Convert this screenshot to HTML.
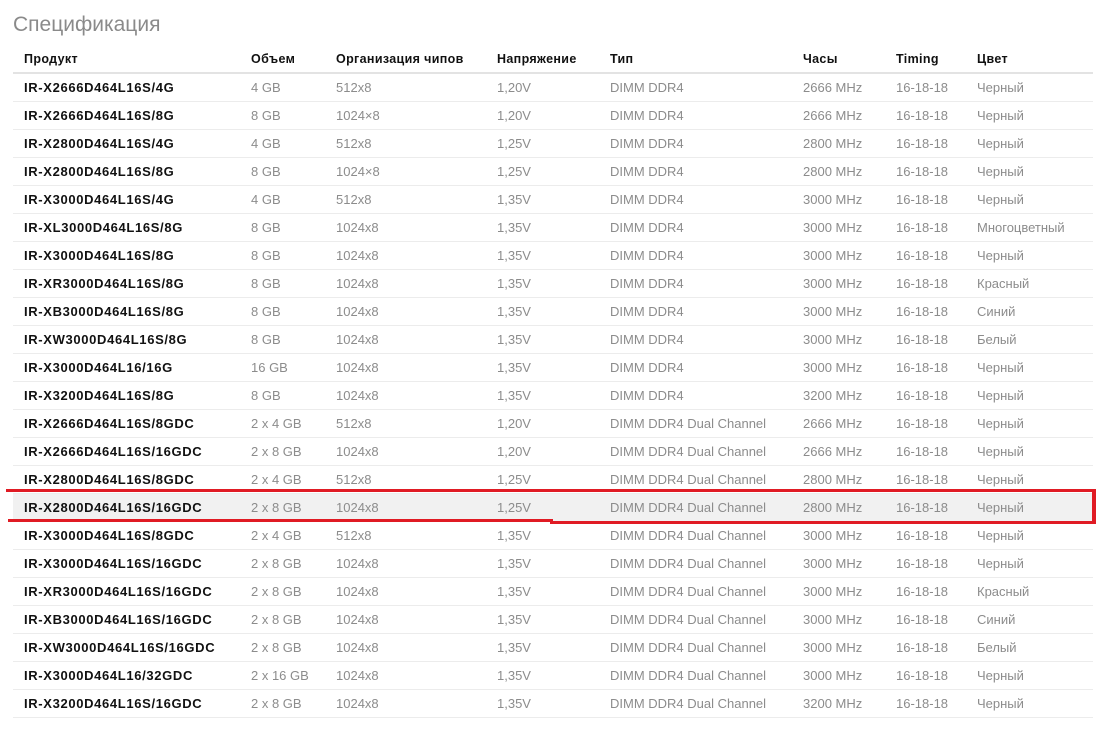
<!DOCTYPE html>
<html><head><meta charset="utf-8"><style>
body{margin:0;background:#fff;width:1106px;height:733px;overflow:hidden;position:relative;font-family:"Liberation Sans",sans-serif}
h1{position:absolute;left:13px;top:13px;margin:0;font-weight:normal;font-size:21px;color:#8a8a8a}
table{position:absolute;left:13px;top:46px;width:1080px;border-collapse:collapse}
td,th{height:27px;padding:0 0 0 11px;text-align:left;font-size:13px;color:#8c8c8c;border-bottom:1px solid #ececec;white-space:nowrap}
th{font-size:12.5px;color:#111;font-weight:bold;border-bottom:2px solid #e3e3e3;height:26px;letter-spacing:0.35px}
td:first-child{font-weight:bold;color:#111;letter-spacing:0.65px}
tr.h td{background:#f1f1f1}
.r{position:absolute;background:#e01b24}
</style></head><body>
<h1>Спецификация</h1>
<table>
<colgroup><col style="width:227px"><col style="width:85px"><col style="width:161px"><col style="width:113px"><col style="width:193px"><col style="width:93px"><col style="width:81px"><col></colgroup>
<tr><th>Продукт</th><th>Объем</th><th>Организация чипов</th><th>Напряжение</th><th>Тип</th><th>Часы</th><th>Timing</th><th>Цвет</th></tr>
<tr><td>IR-X2666D464L16S/4G</td><td>4 GB</td><td>512x8</td><td>1,20V</td><td>DIMM DDR4</td><td>2666 MHz</td><td>16-18-18</td><td>Черный</td></tr>
<tr><td>IR-X2666D464L16S/8G</td><td>8 GB</td><td>1024×8</td><td>1,20V</td><td>DIMM DDR4</td><td>2666 MHz</td><td>16-18-18</td><td>Черный</td></tr>
<tr><td>IR-X2800D464L16S/4G</td><td>4 GB</td><td>512x8</td><td>1,25V</td><td>DIMM DDR4</td><td>2800 MHz</td><td>16-18-18</td><td>Черный</td></tr>
<tr><td>IR-X2800D464L16S/8G</td><td>8 GB</td><td>1024×8</td><td>1,25V</td><td>DIMM DDR4</td><td>2800 MHz</td><td>16-18-18</td><td>Черный</td></tr>
<tr><td>IR-X3000D464L16S/4G</td><td>4 GB</td><td>512x8</td><td>1,35V</td><td>DIMM DDR4</td><td>3000 MHz</td><td>16-18-18</td><td>Черный</td></tr>
<tr><td>IR-XL3000D464L16S/8G</td><td>8 GB</td><td>1024x8</td><td>1,35V</td><td>DIMM DDR4</td><td>3000 MHz</td><td>16-18-18</td><td>Многоцветный</td></tr>
<tr><td>IR-X3000D464L16S/8G</td><td>8 GB</td><td>1024x8</td><td>1,35V</td><td>DIMM DDR4</td><td>3000 MHz</td><td>16-18-18</td><td>Черный</td></tr>
<tr><td>IR-XR3000D464L16S/8G</td><td>8 GB</td><td>1024x8</td><td>1,35V</td><td>DIMM DDR4</td><td>3000 MHz</td><td>16-18-18</td><td>Красный</td></tr>
<tr><td>IR-XB3000D464L16S/8G</td><td>8 GB</td><td>1024x8</td><td>1,35V</td><td>DIMM DDR4</td><td>3000 MHz</td><td>16-18-18</td><td>Синий</td></tr>
<tr><td>IR-XW3000D464L16S/8G</td><td>8 GB</td><td>1024x8</td><td>1,35V</td><td>DIMM DDR4</td><td>3000 MHz</td><td>16-18-18</td><td>Белый</td></tr>
<tr><td>IR-X3000D464L16/16G</td><td>16 GB</td><td>1024x8</td><td>1,35V</td><td>DIMM DDR4</td><td>3000 MHz</td><td>16-18-18</td><td>Черный</td></tr>
<tr><td>IR-X3200D464L16S/8G</td><td>8 GB</td><td>1024x8</td><td>1,35V</td><td>DIMM DDR4</td><td>3200 MHz</td><td>16-18-18</td><td>Черный</td></tr>
<tr><td>IR-X2666D464L16S/8GDC</td><td>2 x 4 GB</td><td>512x8</td><td>1,20V</td><td>DIMM DDR4 Dual Channel</td><td>2666 MHz</td><td>16-18-18</td><td>Черный</td></tr>
<tr><td>IR-X2666D464L16S/16GDC</td><td>2 x 8 GB</td><td>1024x8</td><td>1,20V</td><td>DIMM DDR4 Dual Channel</td><td>2666 MHz</td><td>16-18-18</td><td>Черный</td></tr>
<tr><td>IR-X2800D464L16S/8GDC</td><td>2 x 4 GB</td><td>512x8</td><td>1,25V</td><td>DIMM DDR4 Dual Channel</td><td>2800 MHz</td><td>16-18-18</td><td>Черный</td></tr>
<tr class="h"><td>IR-X2800D464L16S/16GDC</td><td>2 x 8 GB</td><td>1024x8</td><td>1,25V</td><td>DIMM DDR4 Dual Channel</td><td>2800 MHz</td><td>16-18-18</td><td>Черный</td></tr>
<tr><td>IR-X3000D464L16S/8GDC</td><td>2 x 4 GB</td><td>512x8</td><td>1,35V</td><td>DIMM DDR4 Dual Channel</td><td>3000 MHz</td><td>16-18-18</td><td>Черный</td></tr>
<tr><td>IR-X3000D464L16S/16GDC</td><td>2 x 8 GB</td><td>1024x8</td><td>1,35V</td><td>DIMM DDR4 Dual Channel</td><td>3000 MHz</td><td>16-18-18</td><td>Черный</td></tr>
<tr><td>IR-XR3000D464L16S/16GDC</td><td>2 x 8 GB</td><td>1024x8</td><td>1,35V</td><td>DIMM DDR4 Dual Channel</td><td>3000 MHz</td><td>16-18-18</td><td>Красный</td></tr>
<tr><td>IR-XB3000D464L16S/16GDC</td><td>2 x 8 GB</td><td>1024x8</td><td>1,35V</td><td>DIMM DDR4 Dual Channel</td><td>3000 MHz</td><td>16-18-18</td><td>Синий</td></tr>
<tr><td>IR-XW3000D464L16S/16GDC</td><td>2 x 8 GB</td><td>1024x8</td><td>1,35V</td><td>DIMM DDR4 Dual Channel</td><td>3000 MHz</td><td>16-18-18</td><td>Белый</td></tr>
<tr><td>IR-X3000D464L16/32GDC</td><td>2 x 16 GB</td><td>1024x8</td><td>1,35V</td><td>DIMM DDR4 Dual Channel</td><td>3000 MHz</td><td>16-18-18</td><td>Черный</td></tr>
<tr><td>IR-X3200D464L16S/16GDC</td><td>2 x 8 GB</td><td>1024x8</td><td>1,35V</td><td>DIMM DDR4 Dual Channel</td><td>3200 MHz</td><td>16-18-18</td><td>Черный</td></tr>
</table>
<div class="r" style="left:6px;top:489px;width:1090px;height:3px"></div>
<div class="r" style="left:8px;top:519px;width:545px;height:3px"></div>
<div class="r" style="left:550px;top:521px;width:546px;height:3px"></div>
<div class="r" style="left:1092px;top:489px;width:4px;height:35px"></div>
</body></html>
